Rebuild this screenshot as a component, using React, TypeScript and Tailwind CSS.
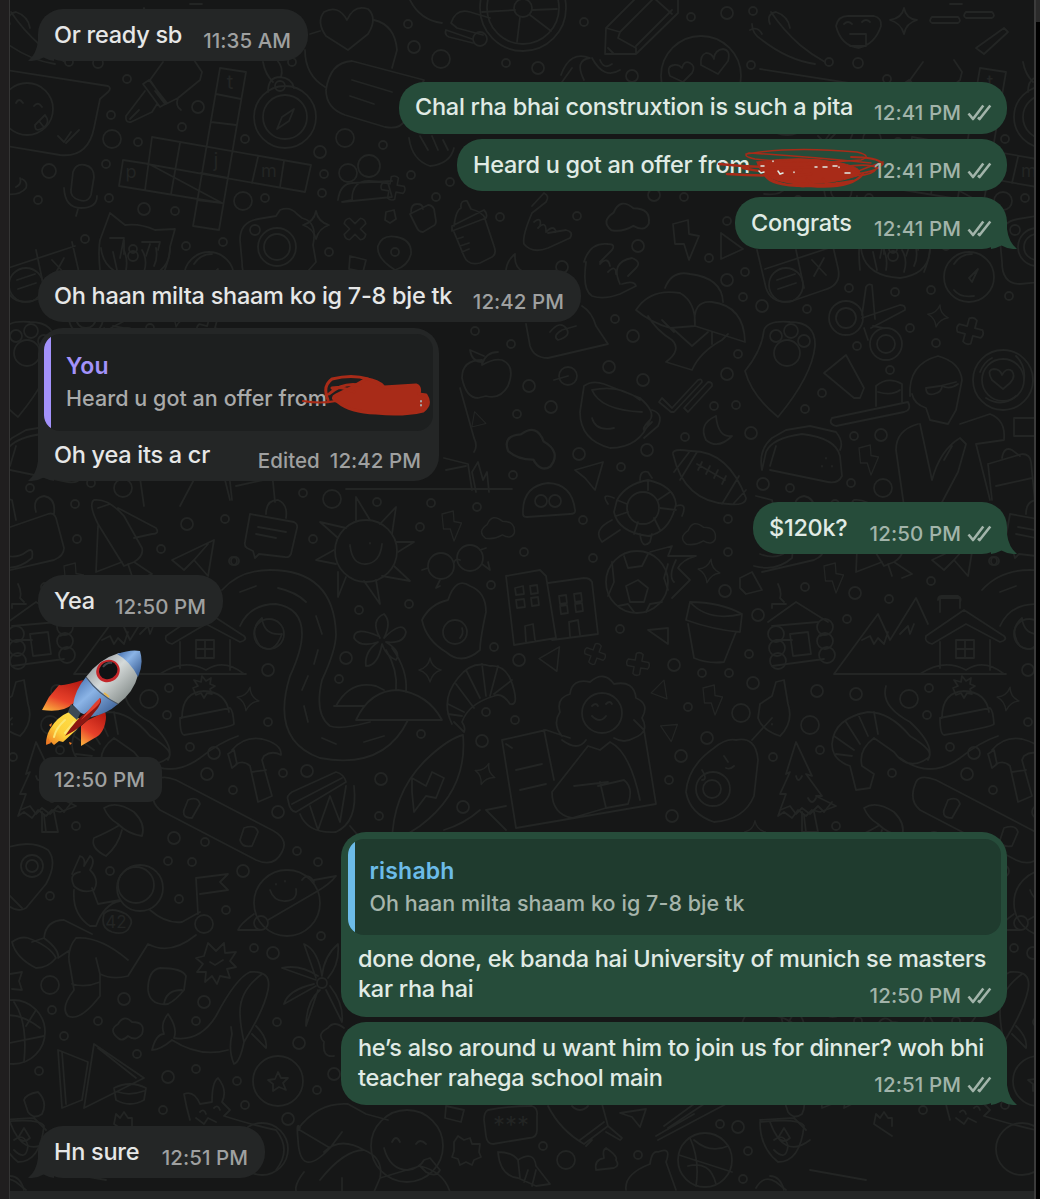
import React from 'react';
import clsx from 'clsx';

type BubbleProps = {
  out?: boolean;
  tail?: boolean;
  className?: string;
  children: React.ReactNode;
};

// distance after which the wallpaper repeats
const TILE = 760;

const dots: [number, number, number][] = [
  [127, 79, 4], [111, 115, 4], [112, 139, 9], [138, 142, 4], [182, 127, 4], [198, 107, 6], [245, 139, 4], [106, 164, 4],
  [49, 171, 7], [38, 200, 4], [109, 198, 4], [144, 209, 6], [175, 211, 4], [243, 201, 9], [265, 198, 4], [85, 239, 4],
  [186, 246, 4], [223, 242, 4], [320, 152, 6], [324, 174, 4], [322, 193, 4], [329, 252, 4], [292, 62, 4], [98, 63, 5],
  [69, 62, 4], [408, 24, 4], [414, 47, 6], [441, 59, 9], [506, 63, 4], [538, 68, 6], [584, 22, 4], [691, 17, 4],
  [727, 13, 6], [753, 11, 4], [751, 65, 4], [632, 76, 6], [345, 138, 9], [383, 145, 4], [411, 175, 4], [450, 182, 4],
  [436, 197, 4], [500, 217, 4], [577, 216, 4], [638, 246, 6], [709, 258, 4], [727, 280, 6], [745, 272, 4], [684, 197, 4],
  [654, 195, 6], [727, 221, 4], [562, 267, 6], [743, 297, 4], [762, 306, 6], [807, 309, 4], [475, 331, 4], [511, 344, 4],
  [615, 319, 4], [633, 336, 6], [609, 367, 6], [568, 376, 9], [529, 386, 6], [551, 407, 6], [643, 380, 6], [727, 374, 6],
  [738, 354, 4], [714, 406, 4], [736, 405, 4], [685, 437, 4], [751, 433, 6], [647, 450, 6], [579, 454, 6], [621, 467, 4],
  [517, 414, 4], [513, 475, 4], [477, 507, 4], [822, 393, 4], [805, 409, 4], [854, 436, 4], [881, 435, 6], [851, 483, 4],
  [883, 488, 9], [763, 484, 6], [790, 488, 4], [890, 370, 4], [857, 346, 4], [910, 328, 4], [936, 343, 4], [1009, 296, 4],
  [931, 290, 4], [895, 292, 4], [849, 288, 4], [431, 503, 4], [420, 527, 4], [377, 502, 4], [524, 552, 4], [583, 520, 4],
  [593, 558, 4], [491, 585, 4], [409, 604, 4], [359, 610, 4], [728, 519, 4], [728, 552, 4], [725, 591, 6], [805, 587, 4],
  [855, 593, 6], [889, 599, 4], [931, 581, 4], [995, 561, 4], [847, 619, 4], [758, 615, 6], [620, 629, 4], [749, 654, 4],
  [494, 647, 4], [519, 660, 6], [674, 665, 6], [702, 673, 4], [729, 673, 4], [753, 683, 6], [817, 691, 6], [856, 694, 6],
  [909, 699, 9], [929, 688, 4], [927, 715, 4], [810, 725, 9], [741, 713, 9], [688, 707, 4], [486, 712, 4], [515, 720, 4],
  [421, 734, 4], [482, 741, 6], [381, 779, 6], [463, 807, 6], [379, 816, 4], [707, 738, 6], [681, 756, 6], [773, 757, 4],
  [820, 750, 4], [950, 747, 4], [974, 753, 6], [967, 774, 6], [993, 790, 4], [892, 773, 4], [669, 780, 4], [672, 816, 6],
  [836, 826, 4], [75, 504, 4], [77, 539, 4], [187, 524, 6], [225, 519, 4], [161, 549, 4], [233, 561, 4], [313, 539, 4],
  [303, 493, 4], [332, 499, 9], [346, 658, 6], [339, 679, 4], [268, 670, 6], [268, 722, 4], [278, 812, 6], [307, 771, 6],
  [283, 773, 4], [174, 838, 6], [205, 842, 4], [168, 861, 4], [192, 862, 4], [297, 851, 4], [318, 862, 4], [243, 871, 6],
  [110, 871, 4], [50, 896, 4], [179, 899, 4], [226, 910, 4], [321, 936, 4], [254, 948, 4], [273, 953, 6], [50, 985, 9],
  [124, 999, 6], [204, 1002, 6], [52, 1010, 4], [98, 1021, 4], [64, 1036, 4], [196, 1021, 4], [277, 1022, 4], [299, 1043, 6],
  [137, 1054, 4], [168, 1077, 6], [196, 1069, 4], [39, 1071, 4], [237, 1081, 4], [245, 1105, 4], [317, 1090, 4], [334, 1074, 6],
  [288, 1119, 6], [163, 1110, 4], [543, 1146, 4], [566, 1160, 9], [638, 1155, 4], [720, 1124, 4], [738, 1127, 6], [748, 1151, 4],
  [743, 1179, 4],
];

const rings: [number, number, number][] = [
  [27, 109, 26], [285, 117, 31], [285, 117, 22], [280, 86, 5], [277, 247, 19], [277, 247, 13], [255, 230, 5], [133, 249, 4],
  [523, 8, 43], [523, 8, 36], [523, 8, 9], [480, 39, 7], [701, 76, 40], [369, 166, 11], [348, 173, 9], [395, 252, 4],
  [786, 285, 17], [969, 277, 25], [846, 318, 17], [846, 318, 10], [886, 344, 16], [886, 344, 9], [776, 336, 6], [791, 331, 7],
  [804, 341, 6], [787, 353, 13], [1003, 380, 30], [1003, 380, 21], [541, 501, 6], [555, 501, 6], [643, 508, 16], [637, 582, 31],
  [366, 551, 31], [441, 566, 13], [470, 558, 13], [455, 632, 12], [269, 634, 15], [776, 634, 8], [777, 648, 8], [778, 661, 8],
  [825, 627, 8], [825, 641, 8], [827, 655, 8], [602, 713, 20], [713, 789, 17], [712, 789, 9], [140, 888, 23], [136, 885, 18],
  [204, 924, 9], [287, 903, 33], [261, 923, 7], [32, 866, 11], [32, 866, 6], [322, 983, 5], [13, 1032, 32], [278, 1081, 25],
  [407, 1146, 36], [705, 1160, 27], [262, 1149, 26], [893, 256, 5],
];

const doodles: string[] = [
  // speech bubble with a smiley, pen nib, microphone
  'M0 69L108 86Q112 88 108 92L100 99L94 128Q88 158 60 155L-6 144M16 103q3-6 7 0M34 106q4-5 8 1M35 125l10-10q6 8-2 13t-8-3M39 121l4 5M58 136l6 6 7-10M66 143l13-13',
  'M163 62L150 80L166 104L178 98L200 80L202 72L194 60M143 84L160 107L167 103L149 80zM145 91L126 116Q125 123 131 122L152 112L157 104M130 119l9-9M178 98q-3 8 3 12M155 91l10 13',
  'M73 172q3-9 12-7t9 12l-3 18q-3 8-12 5t-8-10zM64 188q1 20 17 20t16-12M78 209l-2 7',
  // crossword
  'M220 68L246 72L219 230L193 226zM152 137L311 165L305 192L147 164M123 160L149 164L222 203M123 160L119 186L222 203M152 137L145 190M180 143L171 194M258 157L252 183M284 161L280 187M216 94L241 99M211 122L236 125M197 200L222 203M201 173L228 178',
  'M294 109l-5 12-12 8 5-12zM268 92Q268 77 280 77Q292 78 294 88M263 62q2 12 10 20M277 60q7 8 4 17',
  // cat, camera
  'M110 213L100 240Q98 250 100 270M110 213l15 12q15-2 30 5l20-1-5 18q0 10-6 25M110 238h14l-4 20M124 240v14M142 242h18l-2 8M150 244l-4 12',
  'M240 240Q240 222 258 219L276 216L280 210Q290 206 297 214L302 218Q318 222 313 245L316 262L300 280L260 284Q242 284 242 262z',
  // heart on a note, popsicle
  'M347 20Q354 4 368 9Q378 18 368 34L348 50L326 36Q316 22 324 12Q338 4 347 20zM374 20Q395 25 397 50L392 68M310 34L320 31M305 50Q305 75 325 87M326 90Q330 62 352 61L424 80L405 120Q400 130 385 127L345 115Q326 108 326 90zM352 80l40 12M350 96l24 8',
  // paint palette, wheel spokes, pencil
  'M410 0Q420 20 442 23M451 23Q456 8 470 12L490 18M451 23l6 5 26 7M446 30l26 9M446 30q-2 5 3 7l24 6M515 10L482 12M532 10L557 9M530 15L551 31M520 17L517 42',
  'M640 -6L606 28L605 54L636 54L678 13L678 -6M606 28L620 32L618 38L636 48L636 54M620 32L656 -4M636 46L672 10M654 -2L672 14M608 48l6 6',
  // heart eyes, chilies, hands
  'M682 68q2-8 8-5 6 3 2 10l-9 9-13-6q-4-10 4-11 5-1 8 3zM714 58q1-8 9-9 8 1 5 12l-10 13-17-9q-1-10 5-12 6 0 8 6z',
  'M771 12Q783 30 800 45Q812 55 825 62M752 24Q752 34 762 40Q788 60 815 64M770 24Q766 14 776 12Q788 16 790 28M750 30Q758 26 762 34',
  'M409 138Q412 160 430 166Q450 164 454 148M420 136l8 14M432 136l6 14M443 140l5 10M561 75Q570 50 590 58Q574 60 584 80M592 58Q604 80 620 70M562 82l10-14M600 60q4 10 12 4',
  'M338 200Q340 184 352 183L392 181M352 200Q352 180 370 181L388 183L392 197L342 202z',
  // lock, bottle, pin
  'M410 214l18-9q4 0 6 4l2 12q0 4-3 5l-10 6q-4 0-6-4zM411 212q0-8 6-8 6 0 6 5M395 270Q376 258 378 246Q382 234 397 237Q412 240 411 254Q408 266 395 270M350 256l16 4-3 12-14-3zM386 212l8-2 2 9-6 4-5-3z',
  'M452 226L484 210Q488 214 486 218L452 231zM454 226Q456 210 461 208Q460 200 467 201L471 209Q482 212 485 218M454 232L464 256Q468 266 480 263L492 257Q497 254 494 246L485 219M457 239l6-2M460 246l9-3M462 252l7-3',
  'M532 206L544 193Q550 196 546 202L532 213Q522 236 524 244Q532 254 548 248L570 238Q574 232 566 230L548 233M534 222q8-6 6 4M538 228q8-8 8 3M546 232q8-8 10 0',
  'M584 262Q590 242 608 244Q616 244 612 250L600 262M586 262Q582 290 592 296Q604 300 620 294L636 286Q634 280 622 284M620 284Q610 262 632 258Q642 262 636 268L628 276M600 264q8-8 10 2M608 272q8-8 8 2',
  // moon, mushrooms, paw, scissors
  'M515 254Q505 262 506 275Q510 284 522 282M515 254Q514 268 524 272M22 179Q28 182 26 188Q20 196 4 194M20 178q2 6-4 9',
  'M636 310Q650 288 680 293Q696 302 695 326L670 328Q650 322 636 310zM665 288Q672 270 690 274Q722 278 723 302M695 326Q692 300 712 302Q744 306 745 342L695 326M648 316Q656 330 672 340Q682 350 666 362L692 370Q700 352 722 340L728 334M672 328L692 346L708 332M662 320l12 12M712 332v12',
  'M745 371Q762 350 764 330Q768 320 790 322Q816 322 815 346Q812 376 778 417Q752 396 745 371z',
  'M862 315l4-28q2-4 6-2l3 34M862 318l38-13q6 0 5 5l-34 18M864 328l4 12M873 326l10 2',
  'M757 250l9 38Q772 305 792 301L824 290Q842 285 838 268L832 242M796 250l8 38M765 269l70-23M777 280l18-6M778 289l18-6M812 260l14 15M824 258l-10 18',
  'M861 248Q864 276 900 278Q930 274 930 248M873 252l4 18M884 250q4 10 2 20M902 250q6 10 2 22M916 248q2 10-2 18M972 282l6-13-9 9zM954 264q6-10 18-10M954 290q6 8 20 6',
  // apple, note, hard hat
  'M482 360Q462 360 462 378Q466 398 478 398L486 396Q500 400 508 386Q516 366 502 360Q494 358 482 365zM482 364Q486 352 498 352M484 356l-14-6q2 12 12 12',
  'M526 324L530 346Q534 358 548 358L608 344L596 326Q592 312 582 306M550 332q10-12 16-4t-8 12q-6-4 4-10l14-4',
  // cup, double tick, rugby ball, taco
  'M584 386Q592 380 604 384L640 398Q656 412 650 420Q640 448 610 448Q580 440 580 412zM592 390Q600 410 642 412M592 390Q620 384 640 400M592 418q4 14 22 10M652 410q12 4 6 16l-14 12M650 420q-8 8-6 10l8-8',
  'M662 398l10 10 26-28q4-2 4 2l-28 30-3 0-12-10zM684 408l24-26q5 0 4 4l-24 26zM716 416Q698 424 706 440Q718 450 732 436Q718 438 716 416',
  'M673 454Q672 448 690 451Q728 450 746 498Q746 506 728 504Q684 502 673 454zM697 452L680 480M690 451L674 472M739 476L722 504M746 490L734 503M697 464l28 16M702 462l-4 8M710 466l-4 8M718 470l-4 8M726 476l-4 8',
  'M762 470L766 452Q772 438 802 434Q836 438 840 456L842 476Q838 484 828 482L770 470M762 470Q758 450 772 438L786 430L810 426L836 432Q844 442 840 450M826 458v.5M822 466v.5M832 466v.5M770 466l6-20',
  // brush, tube, coffee
  'M824 373L846 355L864 388L860 398L854 398zM832 418L908 402Q912 410 904 412L836 426Q828 424 832 418zM876 406V386Q888 376 902 384V402M878 392q14 4 22-2',
  'M1003 389l-11-9q-6-10 2-11 6 0 8 6 4-8 10-4 4 6-2 12zM980 372q4-10 12-14M1016 356q10 10 8 24M986 398q16 10 30-2',
  // person reading
  'M910 396Q908 364 938 356Q960 362 962 380L956 410L948 424L930 420L926 408Q914 404 912 394M926 388l14-2 16-4M926 388q0 8 8 6t8-8q8 4 16-2M918 424Q896 430 896 450L904 506M920 424L932 480Q940 450 960 438L966 444L958 472L940 506M960 424L990 414Q1006 420 1004 440L976 444L990 500M944 460l8-14',
  'M988 464l34-10q8 0 9 8l4 40M988 464l4 36M996 486l36-8M1002 458q2-12 10-8l8 6M1014 418h22v18h-22z',
  'M575 470l28-8-8 28-10-12zM474 452q4-6 0-14l-14-50M476 492l-4-20 6-10 5 18 4-8 2 20M346 489h166M444 458l24 6 4 26M446 470l20-4',
  // ghost, turtle, cloud
  'M523 514Q522 486 548 483Q572 484 575 510Q576 514 570 514L527 517Q523 517 523 514z',
  'M617 500Q626 484 648 480Q674 486 676 504Q670 532 648 536Q618 532 614 512zM617 500l10 4M648 480v10M670 492l-12 8M676 510l-16-2M660 530l-6-12M634 534l4-12M616 516l12-4M640 480q0-10 8-8l4 6M676 506q12-4 6 10M612 520q-20 10-10 22l18-12M640 534q2 16 10 8l2-8M614 498q-14-6-6 6',
  // shopping bag, jet, paper plane, briefcase
  'M-4 532L48 514Q54 512 56 518L64 548Q64 556 54 560L2 572M-4 496l16 4 4 20M36 512Q32 498 44 496Q56 498 54 514M0 554q16 6 26-2 8-6 6 6Q16 572-6 566',
  'M98 524Q88 504 94 500Q108 498 124 516L142 548Q144 556 134 562L124 566zM118 508L156 528Q160 534 152 534L134 538M98 526L96 572L122 562M134 562l18 12-10 4M98 508l12-4M128 564l4 12',
  'M172 560L214 540L208 576L194 560L184 570zM194 560l14-16',
  'M250 514l44 8q4 2 3 6l-6 26q-2 4-6 3l-26-3-4 4-2-7-6-3q-3-2-2-6zM266 514q0-14 12-14 10 4 8 18M258 527l28 5M256 534l20 4',
  // sun and glasses
  'M356 521L356 497L370 520M380 524L396 507L392 534M396 542L414 542L398 552M394 566L410 581L382 576M376 580L380 604L364 581M346 577L338 597L338 572M336 564L316 560L334 550M338 538L320 522L346 528M350 546v.5M370 543v.5M350 545q2 20 16 19t16-20',
  'M454 562q2-4 6-2M428 568l-6 2M440 580l-4 8 4-2M480 550l6-2M482 564l8 6-2-8',
  // winding road
  'M222 590Q240 570 270 570Q334 570 336 634Q336 650 322 680Q314 714 330 726Q340 730 370 722M240 626Q250 604 276 604Q302 608 302 634Q302 650 290 676Q270 740 320 758Q384 770 408 720M240 592l16-6M278 588q18 4 28 14M316 616l6 18M318 650l-4 14M308 676l-6 14M304 706l4 16M322 738l14 6M364 742l20-6M262 618Q248 630 260 646Q274 656 282 634Q264 636 262 618',
  // egg, buildings, football
  'M448 600Q456 576 470 586Q486 592 486 612Q480 640 480 650Q462 666 446 652Q426 640 422 620Q430 604 448 600M462 628q2 6-2 10',
  'M506 576L540 570L546 576L556 638L514 645zM548 583L584 578Q590 578 592 582L598 634L552 640M515 588l8-2 1 8-8 1zM530 586l7-1 1 8-7 1zM516 600l8-1 1 8-8 1zM531 598l7-1 1 8-7 1zM559 596l7-1 1 8-7 1zM574 594l7-1 1 8-7 1zM560 606l7-1 1 8-7 1zM575 604l7-1 1 8-7 1zM526 642l-1-16 8-2 2 16M570 636l-1-14 9-2 2 15',
  'M626 586l12-6 10 8-4 14-14 0zM624 556l4 12 14-2 6-12M612 562l2 20-6 14M668 564l-4 14 4 12M618 606l10-2 6 8M646 612l4-8 12-2M650 552L672 546L668 556L696 556Q682 560 678 568L690 580L672 598M676 560q-8 16-2 22',
  // palm island, croissant, flower pot, log cabin
  'M380 638Q370 620 384 614Q392 622 384 638Q402 620 406 632Q404 644 386 642Q402 652 396 660Q386 656 382 644Q378 666 366 666Q364 652 378 642Q360 648 354 638Q354 626 378 636M386 650Q398 670 396 690M392 648Q408 670 406 692M356 720Q370 690 398 690Q428 694 442 720zM334 706h30M336 706Q350 680 376 686L384 690',
  'M452 724Q440 700 458 678Q472 660 490 666Q508 664 514 690Q518 706 510 704Q502 692 494 696Q468 704 462 722Q466 728 464 732L454 722M456 684l18 24M466 670l14 28M482 664l4 32M498 666l-8 30M512 680l-18 14M448 704l16 8M448 714l14 2',
  'M690 602Q720 602 742 614L740 632Q714 630 686 620zM690 602Q708 622 742 614M688 624L694 658Q708 664 724 662L736 632M668 628l-20 2 20 14z',
  'M768 622L796 602L828 622M772 626L818 622M776 640L792 640M820 636L826 634M772 608v-4h14M790 634l18-2 3 22-18 2zM772 666l52-7M778 584q4 8 2 14l4 4M740 578l12-6 10 18-16 4-6-6z',
  // mountains and house
  'M834 674L878 614L890 640L916 598L928 624M834 674H1006M862 640l8-4 4 8 4-6 6 6 4-12M900 634l8-8 2 8 4-10M926 636L964 610L1004 636Q1008 640 1000 642L966 624L932 644Q924 642 926 636M940 642V668M990 640V670M956 640h18v18h-18zM965 640v18M956 649h18M920 674Q944 658 966 670Q984 658 1004 674M940 612v-14h20v10M938 600q0-4 4-4h16q4 2 2 6',
  // winter hat, shrimp, tree
  'M942 718Q942 692 964 691Q986 692 989 712M940 718L990 708Q993 710 994 724Q992 727 944 735Q940 734 940 718zM953 688l5-2-4-6 7 2 1-6 4 5 5-3-1 6 5 2-5 3 2 5-5-1-3 5-3-5-5 2z',
  'M832 744Q834 718 868 712Q890 712 910 736Q936 752 928 758Q908 772 894 752L874 738Q858 750 862 766L874 774L870 788L856 790L850 766Q832 760 832 744M846 722l14 22M858 714l10 22M874 712l4 22M834 736l20 14M836 754l16 2M886 686Q880 706 910 722Q936 746 928 760M900 758Q930 780 960 758Q980 742 998 736',
  'M796 742L812 776L806 774L822 796L816 796L836 806L820 812L812 810L806 816L798 810L792 818L784 812L778 816L786 794L780 794L790 772L786 774zM804 816l2 16M796 776q2 8 6 0M808 798q4 8 8 0',
  // flower head woman and cards
  'M562 736Q552 724 560 712Q556 698 570 694Q572 678 590 682Q604 670 614 684Q634 680 636 698Q650 704 642 718Q650 732 634 738Q624 744 614 738M586 740q-8 12-24 0M592 706q4-4 6 0M606 704q4-4 6 0M592 716q8 8 14 0M502 740L546 730L570 738M502 740L516 828L656 804L644 730L634 720M544 730L554 780M516 770l26-6M520 790l26-6M506 744l6 4M588 746L600 750L610 742Q630 752 640 800M588 746L552 792Q552 814 572 818L606 808L628 804Q634 788 624 780L598 786M574 786l34-4M600 782l6 26M486 810l20-4M486 810l20 20',
  // avocado and key
  'M736 740Q756 736 758 760L754 796Q744 820 714 822Q690 814 686 792Q688 766 714 748Q726 738 736 740M702 770q6 10 0 10M724 756l4 6M726 768q4 2 8-2M752 740l20-22M760 704l12-8 4-14 8-2 4 24Q794 722 780 736Q762 730 758 718zM772 724v.5',
  // surfboard, drum, hammer, skateboard
  'M463 735Q468 790 420 826L392 844Q392 790 430 756Q450 738 463 735M412 778l14 8 6-14 12 6-8 20-10-2-12 16-2-20z',
  'M228 754l6-4 3 14-5 4zM232 750Q244 736 262 739Q282 744 281 755Q272 750 264 756L262 760L272 796L258 802L250 766Q244 760 236 764M252 772l14-2',
  'M288 800Q286 796 292 792L336 772Q344 774 346 782L296 812Q290 812 288 800zM292 804l50-26M300 814Q308 834 336 832Q358 822 354 786M310 806l8 24 12-34 10 26 6-36M350 826l12 14',
  'M156 782Q160 774 176 780L268 828Q290 838 282 852Q274 868 256 860L160 810Q148 800 156 782M188 800q10-4 12 4l-8 14q-10 0-8-8zM244 828q12-4 14 4l-6 14q-10 2-12-6z',
  'M104 808Q116 800 134 812Q146 824 142 836Q128 834 118 824Q108 818 104 808M118 826Q108 832 94 838Q90 848 106 856Q118 846 122 830M20 810l10-4 6 8 6-6 8 6 8-8 6 6 8-10M42 812v20h16l-4-20',
  // map pin, astronaut
  'M0 850Q30 838 48 850Q58 862 46 884L26 908Q16 914 4 902M10 896l12 12',
  'M72 874l8-18q6 2 4 10M84 866l6-10q6 4 0 14Q100 880 94 890Q82 894 74 886Q68 874 80 872M74 890Q72 914 90 926L96 926M92 888L98 904L120 900M96 926Q104 904 120 901M150 910Q166 924 182 922L200 912M196 935Q170 956 148 944L128 976Q112 980 100 974M128 960Q100 936 76 938Q66 950 70 966L74 990Q60 1008 68 1016Q80 1022 100 996V974L96 958M72 984q14 4 28-2M44 938Q46 920 64 920L92 934M44 938Q60 950 58 958L70 950M44 938l-12 4M12 942Q20 936 28 938Q50 946 56 958Q48 968 36 968Q16 958 12 942M196 878L198 914M196 878l32-4-8 8 8 8-28 4M104 914q6-8 22 0 8 6 4 12-4 10-18 6-12-4-8-18',
  // ringed planet, badge, whale, flower
  'M314 880L336 876Q330 884 316 892L268 920M254 914Q240 924 238 930L260 930M276 884v.5M285 881v.5M270 890q4 12 16 11t10-12M302 880q6-8 12 2',
  'M208 943l8 8 8-8 1 10 11-1-6 9 6 6-9 2 3 9-10-2-3 8-5-8-7 6 1-10-9 0 6-8-7-6 8-2zM210 962l5 3 8-5',
  'M168 1004Q150 1006 148 990Q148 970 160 968Q182 968 186 976L184 990Q176 1000 168 1004M164 1004q2-14 18-14',
  'M172 1040Q160 1050 152 1050Q156 1034 164 1034Q160 1024 168 1014Q178 1028 174 1038Q200 1042 216 1016Q236 978 250 972Q272 970 268 990Q264 1010 244 1042Q240 1062 234 1064Q228 1050 232 1034Q230 1020 232 1034M172 1040Q200 1058 228 1050M262 974Q240 990 240 1012Q240 1024 244 1042M256 1026q12 12 10 22L252 1034M241 1002v.5',
  'M316 978L304 944Q318 950 322 976Q324 956 338 944Q340 964 328 978M316 980L282 968Q300 964 318 976M316 986L284 1004Q288 990 314 984M318 990L306 1026Q306 1002 320 990M326 990L342 1022Q344 1004 330 986M10 974l12-2-3 9 3 9-10-1',
  // small cloud, dominoes, tin, fox
  'M118 1038Q108 1030 118 1024Q124 1014 132 1022Q146 1022 142 1034Q136 1042 128 1036Q122 1042 118 1038M324 1042Q316 1034 328 1028Q334 1020 344 1028M324 1042Q322 1058 334 1056',
  'M58 1050L88 1062L82 1100L62 1108zM62 1052L66 1104M94 1044L144 1078L84 1108zM98 1048L136 1078M114 1088Q130 1080 146 1088L144 1100Q130 1108 116 1100zM118 1092q12 4 26-1',
  'M190 1120Q186 1106 184 1094Q194 1090 200 1104L212 1102Q212 1082 218 1078Q228 1090 222 1102L230 1110L224 1116Q256 1126 276 1130Q292 1150 276 1170M200 1112q4-4 6 2M214 1108q4-4 6 2M196 1118l8 6 4-6 8 4',
  'M0 1016q20-4 40 12M4 1044q20-4 40-8M14 1002q14 20 10 60M26 1026l10-16',
  'M278 1072l3 6 7 0-5 5 3 7-7-3-6 4 0-7-5-4 7-1z',
  'M24 1100Q26 1094 38 1092Q48 1102 42 1114Q34 1120 28 1112zM0 1120L34 1118L46 1130M10 1122Q24 1160 50 1140M18 1138l6-10 6 10q-6 6-12 0M114 1124l2-10 4 4 4-6 4 6 4 0 0 8M114 1124l18 12M50 1170L106 1180M10 1176q10 0 14 14',
  // reclining figure and winking face
  'M298 1129Q318 1102 348 1104L366 1114L388 1120M298 1129L330 1148L342 1132M330 1148Q300 1180 298 1140Q296 1120 300 1128M324 1152Q340 1136 364 1150M320 1180Q344 1150 364 1150Q384 1158 380 1178L374 1192M304 1172Q290 1190 300 1196M342 1178l0 14M380 1178L420 1166Q444 1172 450 1192M392 1142q4-8 8 0M416 1144q4-6 10 0M384 1148Q390 1170 408 1170Q420 1168 424 1160L430 1158L440 1170Q436 1178 426 1172L420 1166',
  'M488 1110q20-4 44-4 6 2 5 10v14q0 8-8 8l-36 6q-6 0-7-8l-2-16q0-8 4-10zM446 1106l18 4-3 12-16-4z',
  'M454 1142l4-6 6 4 6-2 2 6 8 0-1 8 2 5-7 3-2 5-6-3-6 3-2-6-6-2 2-6zM498 1152Q512 1152 518 1160Q534 1150 536 1166L550 1184L536 1186L518 1178Q500 1176 498 1152M518 1160l2 18M528 1170l-4 12M536 1170l-4 16',
  // rocket tail, poo, basketball, chopsticks
  'M548 1106Q560 1130 584 1144L608 1126L602 1104M580 1140l24-18M586 1146l6-6M608 1126l14 12-2 2-14-8M596 1170Q594 1160 604 1158Q602 1150 606 1148Q618 1156 616 1160Q620 1166 614 1168zM572 1106q8 8 16 0M620 1113l26-4-6 18-8-10z',
  'M664 1126L694 1104M668 1128L704 1104M658 1140L726 1104M656 1136l38-22M679 1155L732 1172M690 1138Q700 1160 696 1186M694 1140Q710 1154 728 1146M688 1166Q710 1160 716 1184M626 1190Q624 1174 650 1164Q652 1150 658 1152Q672 1146 666 1162L676 1190M760 1122q40-4 44 4-4 36-26 36-18-14-18-40M774 1140q10-8 14 6-2 16-14 4M756 1188q8-14 20-6l10 8',
  // top right corner
  'M836 26q2-10 12-10l26 0q8 2 7 10-6 18-22 22-18-2-23-22M844 24q4-4 8 0M862 22q4-4 8 0M850 34h16v12h-16M932 17h26q4 4 0 6h-26q-4-2 0-6M966 12h26q4 4 0 6h-26q-4-2 0-6M950 4h12M976 48l28-20 4 4-24 22zM904 8q2 11 13 12-11 3-13 14-3-11-14-14 12-2 14-12z',
  'M568 376l-14 4M444 830q20-6 36-20M640 840q30-10 60-4',
];

const sparkle = 'M0-14Q2-3 13 0Q3 3 0 14Q-3 3-13 0Q-2-3 0-14z';
const bolt = 'M-12-16L3-20L4-6L14-4L4 20L-1 4L-10 4z';
const cloud = 'M-16 12Q-26 4-14-4Q-8-18 4-8Q20-8 18 6Q14 14 4 8Q-6 14-16 12z';
const plus = 'M-4-12Q0-15 4-12V-4H12Q15 0 12 4H4V12Q0 15-4 12V4H-12Q-15 0-12-4H-4z';
const wedge = 'M-10-14L12 2L-10 12z';

// repeated symbols: path, x, y, rotation, scale
const stamps: [string, number, number, number, number][] = [
  [sparkle, 316, 225, 0, 1], [sparkle, 938, 316, 10, 0.8], [sparkle, 430, 670, 0, 0.85], [sparkle, 709, 571, 10, 0.85],
  [sparkle, 1008, 699, 10, 0.85], [sparkle, 485, 774, 20, 0.8], [sparkle, 755, 832, 0, 0.8],
  [bolt, 685, 240, 0, 1], [bolt, 868, 460, 0, 0.75], [bolt, 451, 526, 0, 0.75], [bolt, 833, 578, 0, 0.75], [bolt, 712, 700, 0, 0.75],
  [cloud, 629, 217, 0, 1.1], [cloud, 499, 528, 0, 0.85], [cloud, 700, 534, 0, 0.85], [cloud, 534, 448, 30, 1.3],
  [plus, 393, 188, 10, 0.9], [plus, 355, 229, 45, 0.95], [plus, 970, 331, 15, 1], [plus, 638, 664, 10, 0.85], [plus, 595, 654, 20, 0.8],
  [wedge, 731, 247, 0, 1], [wedge, 479, 421, 10, 0.6], [wedge, 553, 661, 60, 0.9], [wedge, 662, 692, 45, 0.7], [wedge, 668, 730, 200, 0.7],
];

// letters inside the crossword, the suit number and the password field
const letters: [string, number, number, number][] = [
  ['t', 230, 89, 20], ['p', 131, 178, 18], ['j', 216, 167, 20], ['m', 269, 177, 18], ['42', 116, 928, 17], ['***', 511, 1134, 24],
];

const Wallpaper: React.FC = () => (
  <svg className="absolute inset-0 h-full w-full" viewBox="10 0 1024 1191" preserveAspectRatio="none" aria-hidden="true">
    <defs>
      <g id="doodles">
        {dots.map(([x, y, r], i) => (
          <circle key={i} cx={x} cy={y} r={r} />
        ))}
        {rings.map(([x, y, r], i) => (
          <circle key={i} cx={x} cy={y} r={r} />
        ))}
        {doodles.map((d, i) => (
          <path key={i} d={d} />
        ))}
        {stamps.map(([d, x, y, rot, s], i) => (
          <path key={i} d={d} transform={`translate(${x} ${y}) rotate(${rot}) scale(${s})`} />
        ))}
        {letters.map(([t, x, y, size]) => (
          <text key={t} x={x} y={y} fontSize={size} textAnchor="middle" fill="#232524" stroke="none">
            {t}
          </text>
        ))}
      </g>
    </defs>
    <g fill="none" stroke="#232524" strokeWidth="1.8" strokeLinecap="round" strokeLinejoin="round">
      <use href="#doodles" />
      <use href="#doodles" x={-TILE} />
      <use href="#doodles" x={TILE} />
    </g>
  </svg>
);

const Ticks: React.FC = () => (
  <svg className="ml-1.5 h-[18px] w-[25px]" viewBox="0 0 25 18" fill="none" stroke="currentColor" strokeWidth="2.6">
    <path d="M1.500 9.500L6 15L16.300 1.500M11 13.300L12.600 15L23.300 1.500" strokeLinejoin="round" />
  </svg>
);

const Tail: React.FC<{ out?: boolean }> = ({ out }) => (
  <svg
    className={clsx(
      'absolute bottom-0 h-[26px] w-[26px]',
      out ? '-right-2.5 text-[#264c3a]' : '-left-2.5 -scale-x-100 text-[#242626]'
    )}
    viewBox="0 0 26 26"
    fill="currentColor"
  >
    <path d="M0 0H16V6Q17.500 19 26 26Q17 26.500 10.500 22.600Q5 25.500 0 26z" />
  </svg>
);

const Bubble: React.FC<BubbleProps> = ({ out, tail, className, children }) => (
  <div
    className={clsx(
      'relative rounded-[25px]',
      out ? 'self-end bg-[#264c3a] text-[#e0ebe5]' : 'self-start bg-[#242626] text-[#e6e7e7]',
      className
    )}
  >
    {tail && <Tail out={out} />}
    {children}
  </div>
);

const Time: React.FC<{ out?: boolean; edited?: boolean; children: string }> = ({ out, edited, children }) => (
  <span
    className={clsx(
      'relative flex items-center whitespace-pre text-[20.5px] leading-[26px] font-[450]',
      out ? 'tracking-[0.1px] text-[#a2b4aa]' : 'tracking-[0.05px] text-[#9fa0a0]'
    )}
  >
    {edited && <span className="mr-2.5">Edited</span>}
    {children}
    {out && <Ticks />}
  </span>
);

// single line message, text on the left and time on the right
const Line: React.FC<BubbleProps & { time: string }> = ({ time, children, out, tail, className }) => (
  <Bubble out={out} tail={tail} className={clsx('flex h-[52px] justify-between pl-4', out ? 'pr-[15px]' : 'pr-[17px]', className)}>
    <p className="relative pt-[10.6px] text-[23.5px] leading-[30px] font-[450] tracking-[-0.27px] whitespace-nowrap">{children}</p>
    <div className="pt-[18.6px]">
      <Time out={out}>{time}</Time>
    </div>
  </Bubble>
);

const Quote: React.FC<{ name: string; out?: boolean; children: React.ReactNode }> = ({ name, out, children }) => (
  <div className={clsx('relative flex overflow-hidden rounded-[16px]', out ? 'h-24 bg-[#1f3b2e]' : 'h-[97px] bg-[#1d1f1f]')}>
    <div className={clsx('w-[7px]', out ? 'bg-[#6cbbe8]' : 'bg-[#a392fa]')} />
    <div className="pt-[17px] pl-[15px] whitespace-nowrap">
      <p className={clsx('text-[23px] leading-[30px] font-semibold tracking-[0.2px]', out ? 'text-[#6cbbe8]' : 'text-[#a392fa]')}>{name}</p>
      <p className={clsx('pt-px text-[21.5px] leading-[33px] font-[450] tracking-[0.05px]', out ? 'text-[#a6b5ac]' : 'text-[#a9aaaa]')}>
        {children}
      </p>
    </div>
  </div>
);

const Rocket: React.FC = () => (
  <svg className="h-[100px] w-[104px]" viewBox="0 0 104 100">
    <defs>
      <linearGradient id="hull" x1="0" y1="0" x2="1" y2="1">
        <stop offset="0.1" stopColor="#8b9198" />
        <stop offset="0.45" stopColor="#d5dad9" />
        <stop offset="0.9" stopColor="#7d8583" />
      </linearGradient>
      <linearGradient id="blue" x1="0" y1="0" x2="1" y2="1">
        <stop offset="0" stopColor="#3d68a8" />
        <stop offset="0.4" stopColor="#8bb4e6" />
        <stop offset="1" stopColor="#2c4f86" />
      </linearGradient>
      <linearGradient id="fin" x1="0.7" y1="0" x2="0.2" y2="1">
        <stop offset="0" stopColor="#b81d14" />
        <stop offset="0.6" stopColor="#e8412a" />
        <stop offset="1" stopColor="#f9a73c" />
      </linearGradient>
      <linearGradient id="flame" x1="1" y1="0" x2="0" y2="1">
        <stop offset="0" stopColor="#ffe14a" />
        <stop offset="0.6" stopColor="#fdd03a" />
        <stop offset="1" stopColor="#ef7420" />
      </linearGradient>
    </defs>
    <path d="M28 62Q16 67 9 79Q5 86 5 94L10 92L13 95L18 91L22 92L33 82Q38 78 40 70z" fill="url(#flame)" />
    <path d="M24 70Q15 78 13 87M33 72L24 83" fill="none" stroke="#fbe773" strokeWidth="2" strokeLinecap="round" />
    <path d="M5 95l2-7 3 5zM8 75l3-2-1 4zM28 92l3 1-2 2z" fill="#ee7a25" />
    <path d="M42 30Q24 36 18 35L8 47L1 60Q14 62 23 59Q32 56 36 48z" fill="url(#fin)" />
    <path d="M64 62Q66 66 64 74Q62 82 57 86L40 96L40 76L47 70z" fill="url(#fin)" />
    <path d="M30 54L40 62L36 70L27 62z" fill="#3d4a55" />
    <path d="M45 27Q34 40 32 55L40 63L50 67Q66 64 77 54z" fill="url(#blue)" />
    <path d="M78 3Q90 4 97 25Q93 42 77 54Q60 44 45 27Q58 9 78 3z" fill="url(#hull)" />
    <path d="M76 4Q90-1 99 1Q103 14 97 27Q89 11 76 4z" fill="url(#blue)" />
    <path d="M45 27Q58 45 77 54" fill="none" stroke="#4b5663" strokeWidth="1.200" />
    <path d="M63 43l5 4" stroke="#e7b751" strokeWidth="2" />
    <ellipse cx="67" cy="21" rx="12" ry="11" fill="#c4262a" transform="rotate(-30 67 21)" />
    <ellipse cx="67" cy="20.500" rx="9.500" ry="8.500" fill="#101214" transform="rotate(-30 67 20)" />
    <path d="M62 17q4-5 9-4" fill="none" stroke="#42484c" strokeWidth="2" />
    <path d="M59 48Q62 50 57 58Q44 76 24 86Q36 68 46 62Q56 54 59 48z" fill="#8d1712" />
    <path d="M59 48Q61 52 54 58L40 70Q52 54 59 48z" fill="#e2402f" />
  </svg>
);

// marker scribbled over the company name
const Scribble: React.FC = () => (
  <svg className="absolute top-2 left-[238px] h-[44px] w-[180px]" viewBox="0 0 180 44" fill="none" stroke="#a82b18" strokeLinecap="round">
    <path d="M46 15Q90 8 130 16Q156 22 146 29Q120 38 84 36Q50 34 46 15z" fill="#a82b18" />
    <path d="M8 17Q60 22 100 20M16 27Q70 30 100 27M32 21Q60 28 90 23" strokeWidth="2.500" />
    <path d="M35 7Q80-1 146 5Q162 9 150 13Q90 18 44 12Q30 9 38 6Q90 9 160 16" strokeWidth="1.500" />
    <path d="M140 10Q166 10 172 17Q164 26 140 27Q162 18 172 15M130 20Q160 16 166 21Q160 30 140 28" strokeWidth="1.800" />
    <path d="M54 28Q60 40 100 39Q140 42 152 27M66 32Q100 42 142 34M80 31q4 10 14 8M96 32q6 8 14 6M112 32q4 8 14 4M54 27q10 13 40 11" strokeWidth="2.400" />
    <path d="M50 19h3M48 24l2 2 3-1M62 14v.5M67 24l2 3 3-1M83 25v.5M104 20h2M112 20h4M122 19h4M134 26h5M128 20v.5" stroke="#e0ebe5" strokeWidth="1.500" />
  </svg>
);

const QuoteScribble: React.FC = () => (
  <svg className="absolute top-[40px] left-[258px] h-[44px] w-[131px]" viewBox="0 0 131 44" fill="none" stroke="#a82b18" strokeLinecap="round" strokeLinejoin="round">
    <path d="M1 27Q18 30 34 27" strokeWidth="2" />
    <path
      d="M34 21L52 12L64 5Q76 6 82 13L114 11Q119 13 117 20L124 21Q130 30 121 37Q100 42 74 39Q48 38 36 28Q28 24 34 21z"
      fill="#a82b18"
      strokeWidth="3"
    />
    <path d="M26 26Q20 12 30 5Q50 0 66 5L80 12M27 20Q40 8 58 11M30 14Q40 12 52 18" strokeWidth="3" />
    <path d="M119 27v.5M119 31v.5" stroke="#a9aaaa" strokeWidth="2" />
  </svg>
);

const App: React.FC = () => {
  return (
    <div className="flex h-[1199px] w-[1040px] overflow-hidden bg-black font-['Inter','Liberation_Sans',sans-serif]">
      <div className="w-2.5 shrink-0 border-r border-[#353535] bg-[#201e1f]" />

      <div className="flex w-[1024px] shrink-0 flex-col">
        <main className="relative flex h-[1191px] flex-col bg-[#161717] pr-[27px] pl-7">
          <Wallpaper />

          <Line tail time="11:35 AM" className="mt-[9px] w-[270px]">
            Or ready sb
          </Line>

          <Line out time="12:41 PM" className="mt-[20.5px] w-[608px]">
            Chal rha bhai construxtion is such a pita
          </Line>
          <Line out time="12:41 PM" className="mt-[5.5px] w-[550px]">
            Heard u got an offer from
            <Scribble />
          </Line>
          <Line out tail time="12:41 PM" className="mt-1.5 w-[272px]">
            Congrats
          </Line>

          <Line time="12:42 PM" className="mt-[21px] w-[543px]">
            Oh haan milta shaam ko ig 7-8 bje tk
          </Line>
          <Bubble tail className="mt-1.5 h-[153px] w-[401px] px-1.5 pt-1.5">
            <Quote name="You">
              Heard u got an offer from
              <QuoteScribble />
            </Quote>
            <div className="relative flex justify-between pr-3 pl-2.5">
              <p className="pt-[9px] text-[23.5px] leading-[30px] font-[450] tracking-[-0.27px]">Oh yea its a cr</p>
              <div className="pt-[17px]">
                <Time edited>12:42 PM</Time>
              </div>
            </div>
          </Bubble>

          <Line out tail time="12:50 PM" className="mt-[21px] w-[254px]">
            $120k?
          </Line>

          <Line time="12:50 PM" className="mt-[21px] w-[185px]">
            Yea
          </Line>
          <div className="relative mt-[23px] ml-[3px] h-[97px]">
            <Rocket />
          </div>
          <Bubble className="mt-2.5 ml-px h-[45px] w-[123px] rounded-[14px]! pt-2.5 pl-[15px]">
            <Time>12:50 PM</Time>
          </Bubble>

          <Bubble out className="mt-[30px] h-[184.5px] w-[666px] px-[6.5px] pt-[7px]">
            <Quote out name="rishabh">
              Oh haan milta shaam ko ig 7-8 bje tk
            </Quote>
            <div className="pt-[9px] pl-[10.5px] text-[23.5px] leading-[30px] font-[450] tracking-[-0.28px] whitespace-nowrap">
              <p>done done, ek banda hai University of munich se masters</p>
              <div className="flex justify-between pr-[8.5px]">
                <p>kar rha hai</p>
                <div className="pt-[9px]">
                  <Time out>12:50 PM</Time>
                </div>
              </div>
            </div>
          </Bubble>
          <Bubble out tail className="mt-[5.5px] h-[82.5px] w-[666px] pt-[10.5px] pr-[15px] pl-[17px]">
            <div className="relative text-[23.5px] leading-[30px] font-[450] tracking-[-0.27px] whitespace-nowrap">
              <p>he’s also around u want him to join us for dinner? woh bhi</p>
              <div className="flex justify-between">
                <p>teacher rahega school main</p>
                <div className="pt-[9px]">
                  <Time out>12:51 PM</Time>
                </div>
              </div>
            </div>
          </Bubble>

          <Line tail time="12:51 PM" className="mt-[21.5px] w-[227px]">
            Hn sure
          </Line>
        </main>
        <div className="h-2 bg-[#242626]" />
      </div>

      <div className="flex-1 border-l-2 border-[#3b3b3b] bg-black">
        <div className="h-[22px] bg-[#2a2a2a]" />
      </div>
    </div>
  );
};

export default App;
